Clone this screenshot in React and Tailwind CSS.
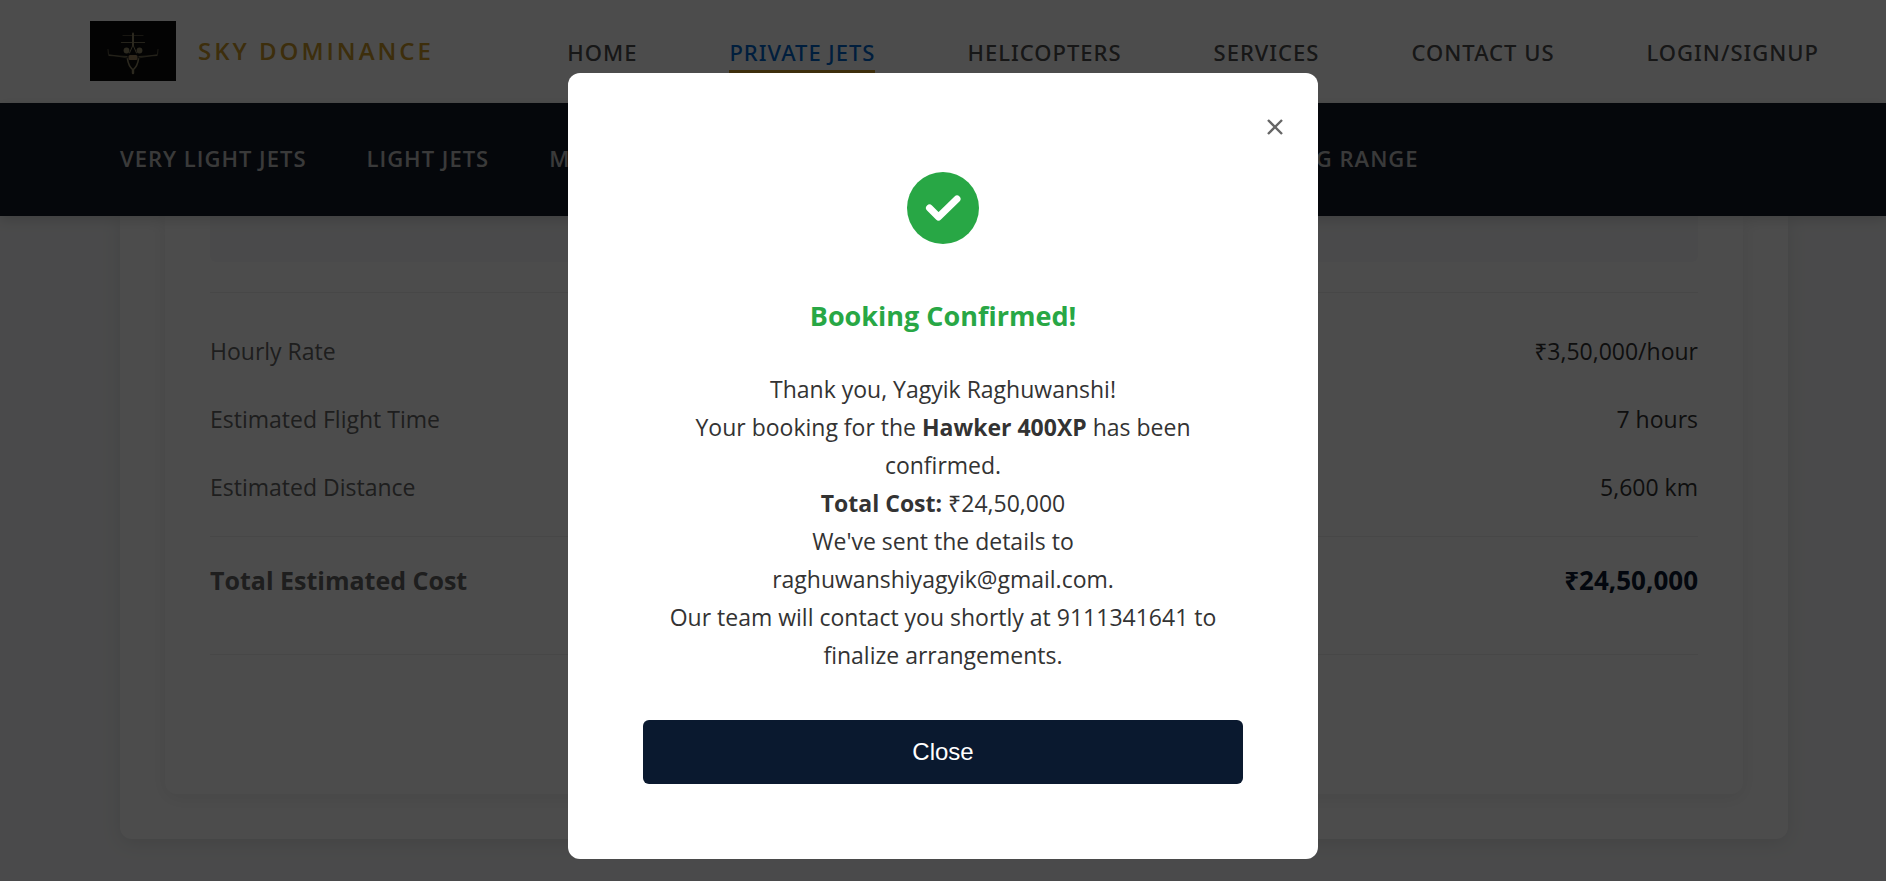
const NAV = ['HOME', 'PRIVATE JETS', 'HELICOPTERS', 'SERVICES', 'CONTACT US', 'LOGIN/SIGNUP'];
const CLASSES = ['VERY LIGHT JETS', 'LIGHT JETS', 'MIDSIZE JETS', 'SUPER MID JETS', 'LARGE JETS', 'ULTRA LONG RANGE'];
const ROWS = [
  ['Hourly Rate', '₹3,50,000/hour'],
  ['Estimated Flight Time', '7 hours'],
  ['Estimated Distance', '5,600 km'],
];

function Logo() {
  return (
    <svg viewBox="0 0 86 60" className="h-[60px] w-[86px] bg-[#0d0d0d]" role="img" aria-label="Sky Dominance">
      <g fill="none" stroke="#938a68" strokeLinecap="round">
        <path d="M33 14.5h20" strokeWidth="1.2" opacity=".5" />
        <path d="M31.5 21.5h23" strokeWidth="1.2" opacity=".85" />
        <path d="M43 12.5v12" strokeWidth="2" />
        <path d="M43 24l-3.5 8M43 24l3.5 8" strokeWidth="1" />
        <path d="M18 28.5l.5 5 19 3.5M68 28.5l-.5 5-19 3.5" strokeWidth="1" opacity=".6" />
        <path d="M19 34.5l18 1M67 34.5l-18 1" strokeWidth="1.2" opacity=".8" />
        <path d="M37.5 38c.5 4 2 8 5.5 11c3.5-3 5-7 5.5-11" strokeWidth="1.6" />
        <path d="M43 49v3" strokeWidth="2.4" />
      </g>
      <circle cx="36.5" cy="29.5" r="2.9" fill="#938a68" />
      <circle cx="49.5" cy="29.5" r="2.9" fill="#938a68" />
      <rect x="38.5" y="34" width="9" height="5" rx="1.5" fill="#a08560" />
    </svg>
  );
}

function Header() {
  return (
    <header className="flex h-[103px] items-center justify-between bg-white pr-[67px] pb-px pl-[90px]">
      <a href="#home" className="flex items-center gap-[22px]">
        <Logo />
        <span className="text-2xl font-semibold tracking-[3px] text-[#cb992a]">SKY DOMINANCE</span>
      </a>
      <nav className="flex gap-[92px] pt-px font-['Noto_Sans','Open_Sans',sans-serif]">
        {NAV.map((item) => (
          <a
            key={item}
            href="#nav"
            className={
              item === 'PRIVATE JETS'
                ? 'border-b-3 border-[#cb992a] pt-1 text-[22px] leading-9 font-medium tracking-[1px] text-[#0066cc]'
                : 'border-b-3 border-transparent pt-1 text-[22px] leading-9 font-medium tracking-[1px] text-[#4d4d4d]'
            }
          >
            {item}
          </a>
        ))}
      </nav>
    </header>
  );
}

function SubNav() {
  return (
    <nav className="relative flex h-[113px] items-center gap-[60px] bg-[#111827] px-[120px] pb-[3px] whitespace-nowrap shadow-[0_4px_12px_rgba(0,0,0,0.15)]">
      {CLASSES.map((item) => (
        <a key={item} href="#class" className="text-[22px] font-semibold tracking-[1px] text-[#c4c4c4]">
          {item}
        </a>
      ))}
    </nav>
  );
}

function Summary() {
  return (
    <main className="pr-[98px] pl-[120px]">
      <section className="rounded-b-xl bg-white px-[45px] pb-[45px] shadow-[0_4px_20px_rgba(0,0,0,0.1)]">
        <div className="rounded-b-xl bg-white px-[45px] pb-[139px] shadow-[0_4px_20px_rgba(0,0,0,0.08)]">
          <div className="h-[46px] rounded-b-md bg-[#f8f9fa]" />
          <dl className="mt-[30px] border-y border-[#eeeeee] pt-6 pb-[15px] text-[23px]">
            {ROWS.map(([label, value]) => (
              <div key={label} className="flex items-center justify-between py-4 leading-9">
                <dt className="text-[#666666]">{label}</dt>
                <dd className="text-[#333333]">{value}</dd>
              </div>
            ))}
          </dl>
          <div className="flex h-[118px] justify-between border-b border-[#eeeeee] pt-[23px] text-[25px] leading-10 font-bold">
            <span className="text-[#666666]">Total Estimated Cost</span>
            <span className="text-[26px] text-[#0a192f]">₹24,50,000</span>
          </div>
        </div>
      </section>
    </main>
  );
}

function Confirmation() {
  return (
    <div className="fixed inset-0 z-10 flex items-start justify-center overflow-hidden bg-black/70 pt-[73px]">
      <div role="dialog" aria-modal="true" aria-labelledby="title" className="relative w-[750px] rounded-xl bg-white px-[75px] pt-[99px] pb-[75px] text-center text-[#333333]">
        <button aria-label="Dismiss" className="absolute top-[42px] right-[31px] flex size-6 items-center justify-center">
          <svg viewBox="0 0 24 24" className="size-6" fill="none" stroke="#666666" strokeWidth="2.4">
            <path d="M5 5l14 14M19 5L5 19" />
          </svg>
        </button>
        <svg viewBox="0 0 72 72" className="mx-auto size-[72px]" aria-hidden="true">
          <circle cx="36" cy="36" r="36" fill="#28a745" />
          <path d="M22.5 36l9 9L50 27" fill="none" stroke="#ffffff" strokeWidth="7" strokeLinecap="round" strokeLinejoin="round" />
        </svg>
        <h2 id="title" className="mt-[50px] text-[27px] leading-11 font-bold text-[#28a745]">Booking Confirmed!</h2>
        <p className="mt-[32px] text-[23px] leading-[38px]">
          Thank you, Yagyik Raghuwanshi!
          <br />
          Your booking for the <strong>Hawker 400XP</strong> has been confirmed.
          <br />
          <strong>Total Cost:</strong> ₹24,50,000
          <br />
          We've sent the details to raghuwanshiyagyik@gmail.com.
          <br />
          Our team will contact you shortly at 9111341641 to finalize arrangements.
        </p>
        <button className="mt-[46px] h-16 w-full rounded-md bg-[#0a192f] font-['Liberation_Sans',sans-serif] text-2xl text-white">Close</button>
      </div>
    </div>
  );
}

export default function App() {
  return (
    <div className="min-h-screen overflow-hidden bg-[#f8f9fa] font-['Open_Sans','Noto_Sans',sans-serif]">
      <Header />
      <SubNav />
      <Summary />
      <Confirmation />
    </div>
  );
}
